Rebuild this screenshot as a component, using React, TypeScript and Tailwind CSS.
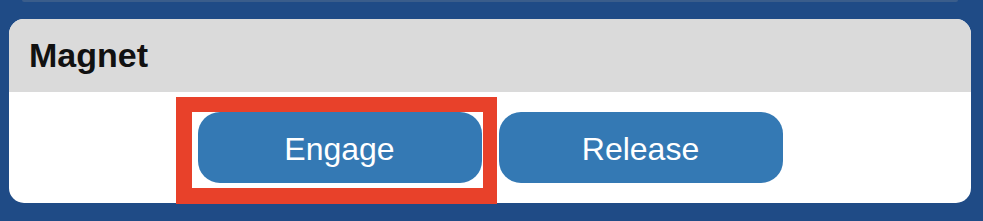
import React from "react";

export default function App() {
  return (
    <div className="relative w-[983px] h-[221px] bg-[#1f4b86] overflow-hidden font-['Liberation_Sans',Arial,sans-serif]">
      <div className="h-[2px] ml-[22px] mr-[25px] bg-[#3a5d8b] rounded-b-[4px]" />
      <div className="mt-[17px] ml-[9px] w-[962px] h-[184px] rounded-[15px] bg-white overflow-hidden flex flex-col">
        <div className="h-[73px] bg-[#dadada] pl-[20px] flex items-center">
          <span className="text-[34px] font-bold text-[#111111]">Magnet</span>
        </div>
        <div className="flex-1 flex items-center justify-center gap-[17px]">
          <button className="w-[284px] h-[71px] rounded-[22px] bg-[#3479b4] text-white text-[32px] pt-[2px]">
            Engage
          </button>
          <button className="w-[284px] h-[71px] rounded-[22px] bg-[#3479b4] text-white text-[32px] pt-[2px]">
            Release
          </button>
        </div>
      </div>
      <div className="absolute left-[176px] top-[97px] w-[321px] h-[107px] border-l-[16px] border-t-[15px] border-r-[14px] border-b-[16px] border-[#e8412a] pointer-events-none" />
    </div>
  );
}
